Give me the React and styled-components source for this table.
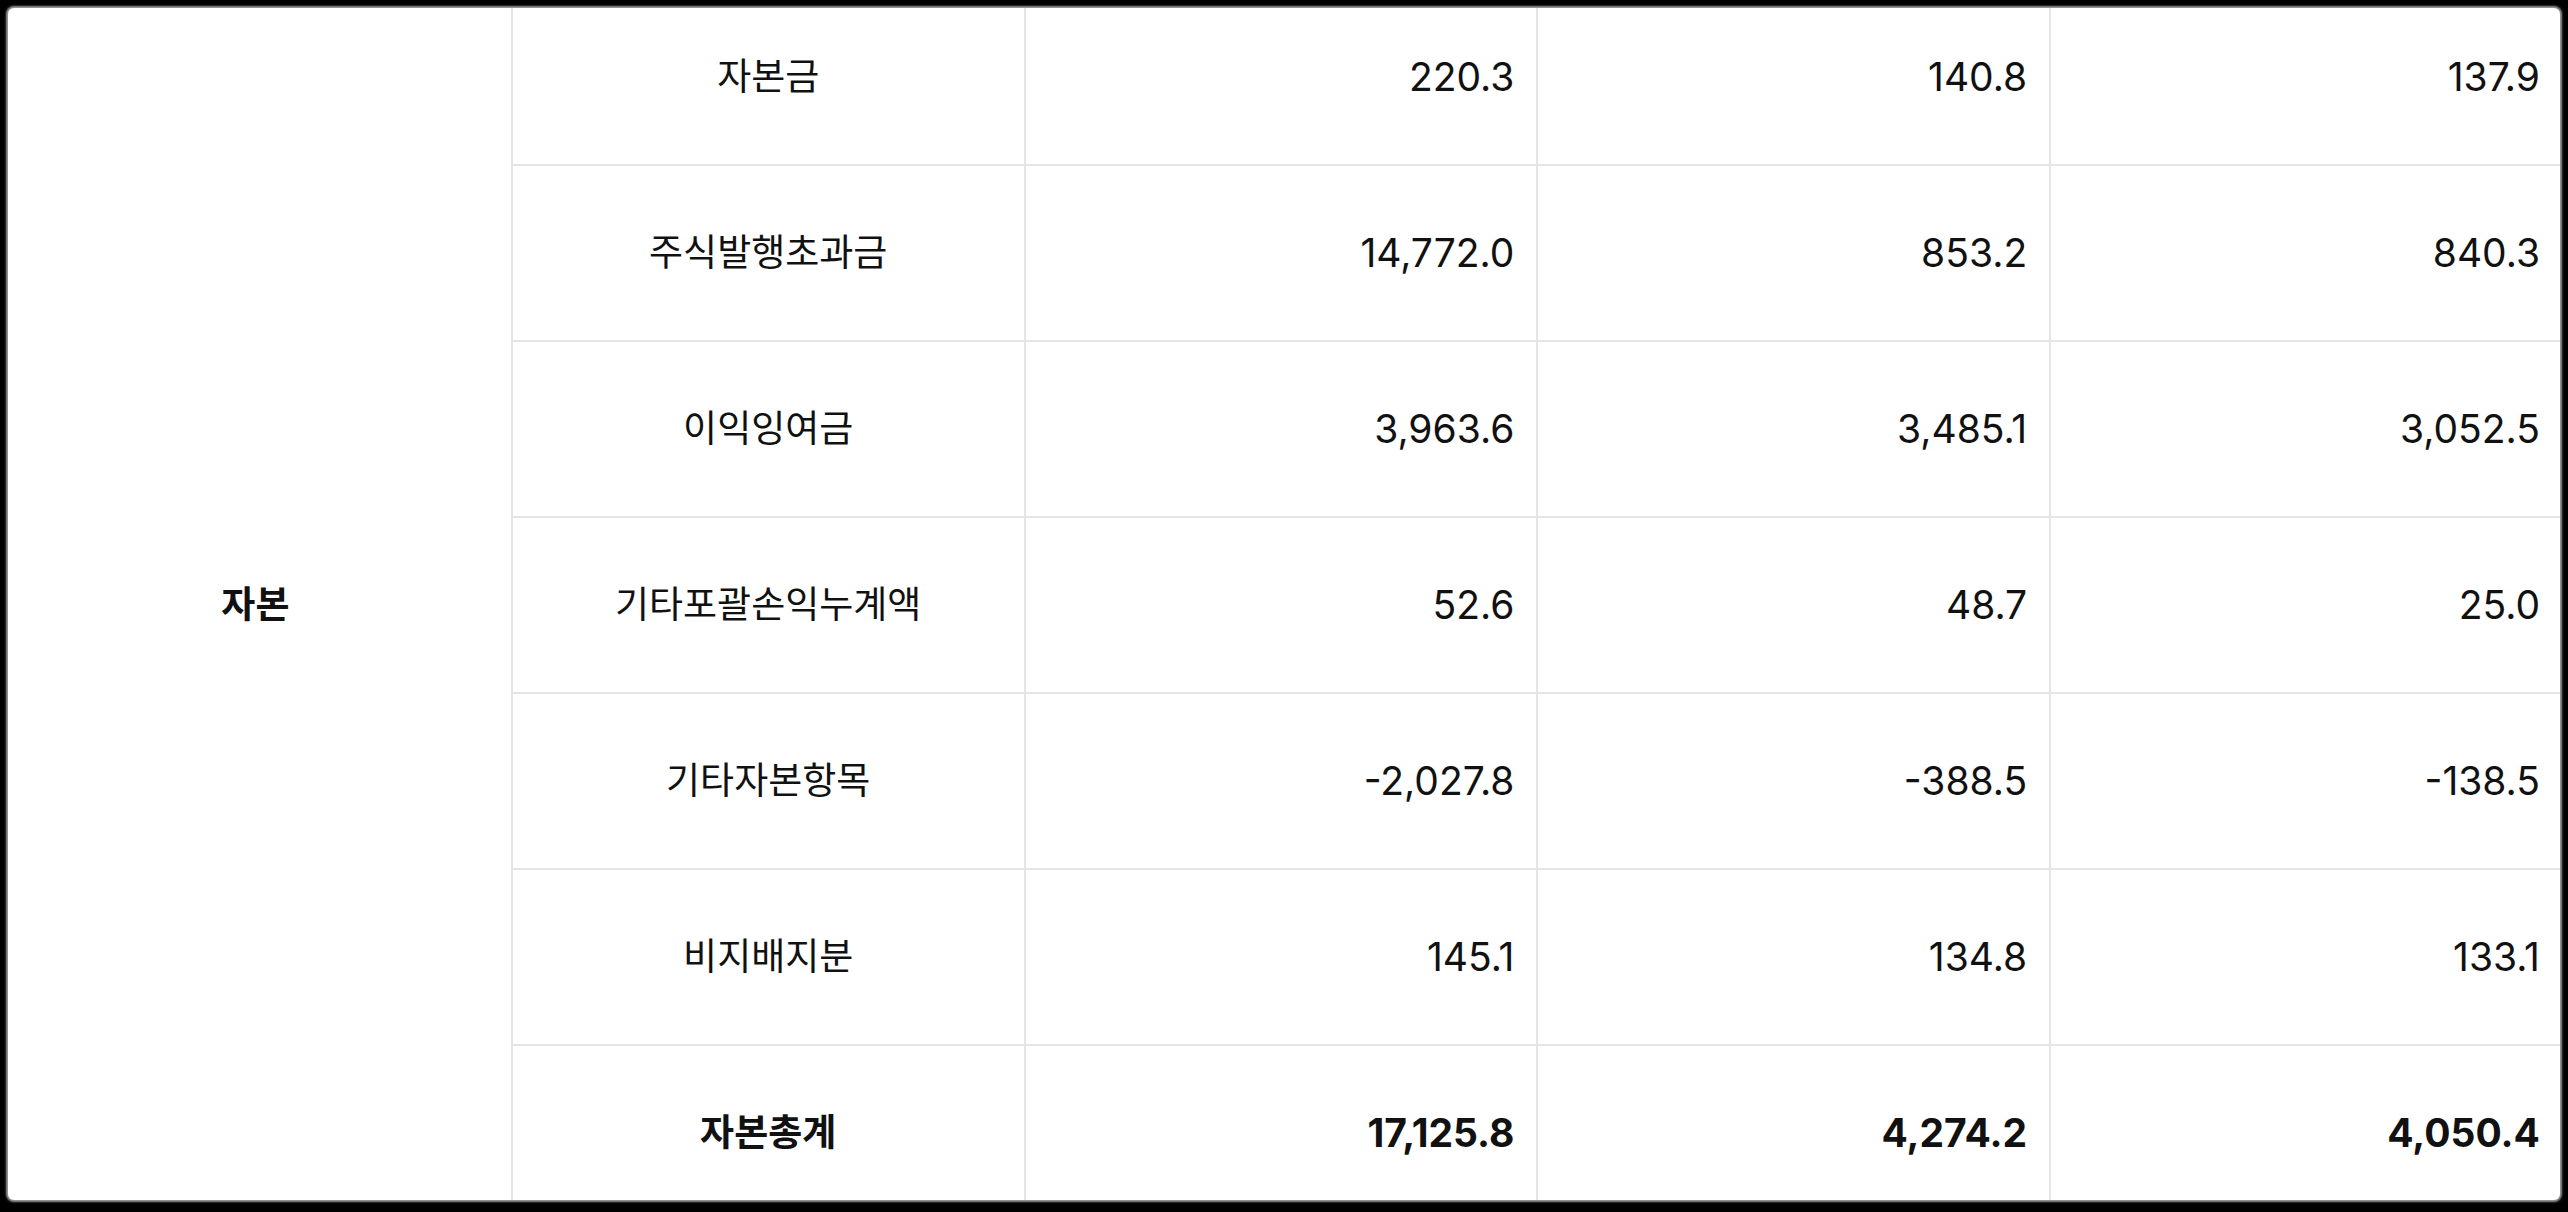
import { createGlobalStyle, styled } from 'styled-components'

const GlobalStyle = createGlobalStyle`
  html, body {
    margin: 0;
    padding: 0;
    background: #000;
  }
  body {
    font-family: Inter, 'Noto Sans CJK KR', sans-serif;
    color: #111;
  }
`

const rows = [
  { label: '자본금', values: ['220.3', '140.8', '137.9'] },
  { label: '주식발행초과금', values: ['14,772.0', '853.2', '840.3'] },
  { label: '이익잉여금', values: ['3,963.6', '3,485.1', '3,052.5'] },
  { label: '기타포괄손익누계액', values: ['52.6', '48.7', '25.0'] },
  { label: '기타자본항목', values: ['-2,027.8', '-388.5', '-138.5'] },
  { label: '비지배지분', values: ['145.1', '134.8', '133.1'] },
  { label: '자본총계', values: ['17,125.8', '4,274.2', '4,050.4'], total: true },
]

function App() {
  return (
    <>
      <GlobalStyle />
      <Screen>
        <Viewport>
          <Table>
            <colgroup>
              <col />
              <col />
              <col />
              <col />
              <col />
            </colgroup>
            <tbody>
              {rows.map((row, i) => (
                <Row key={row.label}>
                  {i === 0 && (
                    <Cell rowSpan={rows.length} $bold>
                      자본
                    </Cell>
                  )}
                  <Cell $bold={row.total}>{row.label}</Cell>
                  {row.values.map((v, j) => (
                    <Cell key={j} $numeric $bold={row.total}>
                      {v}
                    </Cell>
                  ))}
                </Row>
              ))}
            </tbody>
          </Table>
        </Viewport>
      </Screen>
    </>
  )
}

export default App

const Screen = styled.div`
  width: 2568px;
  height: 1212px;
  padding: 8px 8px 12px 8px;
  box-sizing: border-box;
  display: flex;
`

const Viewport = styled.div`
  flex: 1;
  background: #fff;
  border-radius: 6px;
  overflow: hidden;
  box-shadow: 0 0 2px 2px rgba(170, 170, 170, 0.9);
`

const Table = styled.table`
  /* scrolled view: first row and left edge sit a little outside the viewport */
  margin: -20px 0 0 -10px;
  width: 2566px;
  table-layout: fixed;
  border-collapse: collapse;

  & col {
    width: 20%;
  }
`

const Row = styled.tr`
  height: 176px;
`

const Cell = styled.td`
  border: 2px solid #e5e5e5;
  padding: 0 22px;
  text-align: ${(p) => (p.$numeric ? 'right' : 'center')};
  vertical-align: middle;
  font-size: ${(p) => (p.$numeric ? '39px' : '37px')};
  font-weight: ${(p) => (p.$bold ? 700 : 400)};
  letter-spacing: 0;
  line-height: 1.4;
  white-space: nowrap;
`
